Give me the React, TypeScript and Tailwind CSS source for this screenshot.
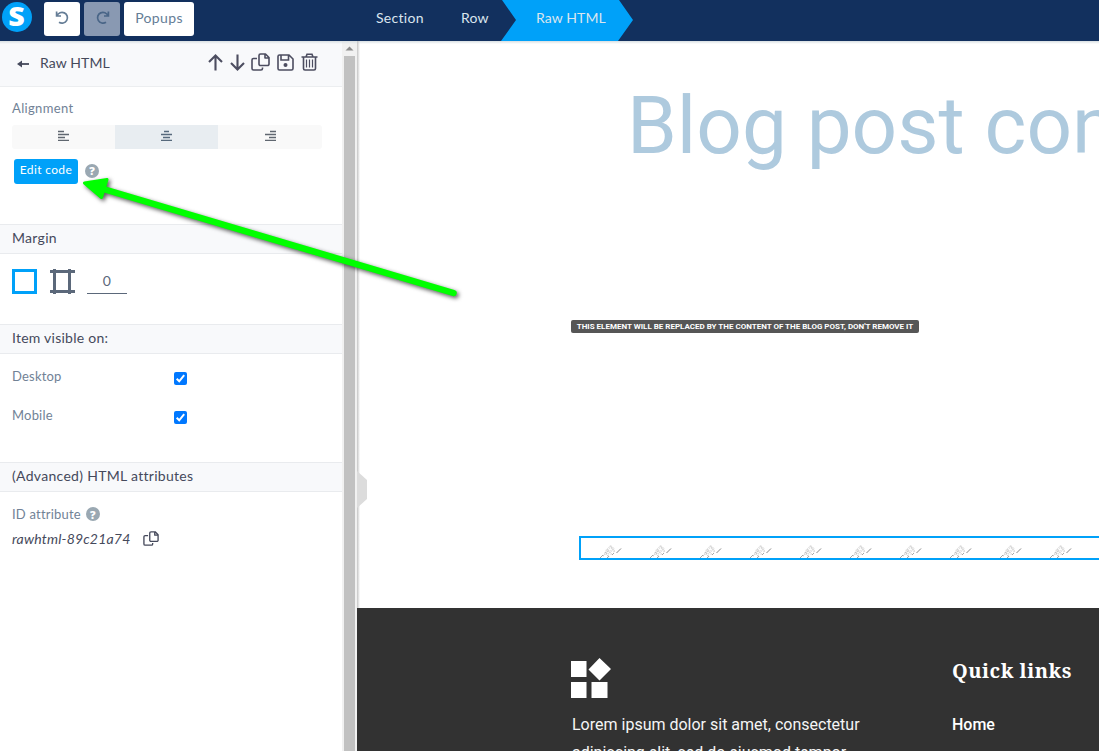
import React from "react";

function Logo() {
  return (
    <div className="flex h-[30px] w-[30px] items-center justify-center rounded-full bg-[#00a1f9] font-['Open_Sans',sans-serif] text-[26px] leading-[30px] font-extrabold text-white">
      <span className="-translate-y-px scale-x-110">S</span>
    </div>
  );
}

function TurnIcon({ flip }: { flip?: boolean }) {
  return (
    <svg width="15" height="15" viewBox="0 0 15 15" fill="none" stroke="currentColor" strokeWidth="1.700" className={flip ? "-scale-x-100" : ""}>
      <path d="M1.600 1.500V6H6M2 5.800A5.400 5.400 0 1 1 4 12.200" />
    </svg>
  );
}

function CopyIcon({ width, height, stroke }: { width: number; height: number; stroke: number }) {
  return (
    <svg width={width} height={height} viewBox="0 0 19 18" fill="none" stroke="currentColor" strokeWidth={stroke} strokeLinejoin="round">
      <path d="M9.500 1H14.500L18 4.500V11a1.500 1.500 0 0 1-1.500 1.500h-7A1.500 1.500 0 0 1 8 11V2.500A1.500 1.500 0 0 1 9.500 1ZM14 1V5H18" />
      <path d="M6 5.500H2.500A1.500 1.500 0 0 0 1 7v8.500A1.500 1.500 0 0 0 2.500 17H10a1.500 1.500 0 0 0 1.500-1.500V14.500" />
    </svg>
  );
}

function Help() {
  return (
    <span className="flex h-[14px] w-[14px] items-center justify-center rounded-full bg-[#9aa8b2] font-['Open_Sans',sans-serif] text-[11px] leading-none font-extrabold tracking-normal text-white">
      ?
    </span>
  );
}

function AlignIcon({ d }: { d: string }) {
  return (
    <svg width="11" height="11" viewBox="0 0 11 11" stroke="currentColor" strokeWidth="1.300">
      <path d={d} />
    </svg>
  );
}

function Check() {
  return (
    <svg width="13" height="13" viewBox="0 0 13 13">
      <rect width="13" height="13" rx="2" fill="#0078ff" />
      <path d="M2.700 6.800 5.200 9.300 10.200 3.200" fill="none" stroke="#fff" strokeWidth="2" />
    </svg>
  );
}

function Heading({ children }: { children: React.ReactNode }) {
  return (
    <div className="flex h-[30px] shrink-0 items-center border-y border-[#e9ebee] bg-[#f8f9fb] px-3 pb-[3px] text-[14px] tracking-[0.300px] text-[#45495b]">
      {children}
    </div>
  );
}

function Sidebar() {
  return (
    <aside className="flex h-full w-[342px] shrink-0 flex-col bg-white text-[13px] tracking-[0.200px] text-[#718296]">
      <div className="flex h-[46px] shrink-0 items-center border-b border-[#eceef0] bg-[#f8f9fb] pb-[2px] pl-[17px] text-[#45495b]">
        <svg width="12" height="10" viewBox="0 0 12 10" fill="none" stroke="currentColor" strokeWidth="1.800" className="mt-[3px]">
          <path d="M12 5H2" />
          <path d="M5 1.500 0 5l5 3.500z" fill="currentColor" stroke="none" />
        </svg>
        <span className="ml-[11px] w-[168px] pb-[1px] text-[14px] tracking-[0.100px]">Raw HTML</span>
        <div className="flex items-center pb-px text-[#4c4d60]">
          <svg width="15" height="17" viewBox="0 0 15 17" fill="none" stroke="currentColor" strokeWidth="2.100"><path d="M7.500 16.500V2M1 8l6.500-6.500L14 8" /></svg>
          <svg width="15" height="17" viewBox="0 0 15 17" fill="none" stroke="currentColor" strokeWidth="2.100" className="ml-[7px]"><path d="M7.500.5V15M1 9l6.500 6.500L14 9" /></svg>
          <span className="ml-[6px]"><CopyIcon width={19} height={18} stroke={1.6} /></span>
          <svg width="17" height="17" viewBox="0 0 17 17" fill="none" stroke="currentColor" strokeWidth="1.600" className="ml-[7px]">
            <path d="M2.500 1H12l4 4v9.500a1.500 1.500 0 0 1-1.500 1.500h-12A1.500 1.500 0 0 1 1 14.500v-12A1.500 1.500 0 0 1 2.500 1ZM4 1v5h7.500V1" />
            <circle cx="8.500" cy="11" r="2" fill="currentColor" stroke="none" />
          </svg>
          <svg width="17" height="18" viewBox="0 0 17 18" fill="none" stroke="currentColor" strokeWidth="1.600" className="ml-[7px]">
            <path d="M.5 4h16M5 4l1-2.700h5L12 4M2.500 4v11.500A1.500 1.500 0 0 0 4 17h9a1.500 1.500 0 0 0 1.500-1.500V4" />
            <path d="M5.500 6.500v8M8.500 6.500v8M11.500 6.500v8" strokeWidth="1.200" />
          </svg>
        </div>
      </div>
      <div className="flex h-[137px] shrink-0 flex-col px-3 pt-[12px]">
        <div className="h-[26px] leading-[19px] tracking-[0.350px]">Alignment</div>
        <div className="flex h-6 w-[310px] shrink-0 overflow-hidden rounded-[3px] bg-[#f9f9f9] text-[#606770]">
          <div className="flex w-[103px] items-center justify-center pb-[3px]"><AlignIcon d="M0 1.500h6M0 4.500h11M0 7.500h7M0 10.500h11" /></div>
          <div className="flex w-[103px] items-center justify-center bg-[#e8edf1] pb-[3px] text-[#56697c]"><AlignIcon d="M3 1.500h5M0 4.500h11M2 7.500h7M0 10.500h11" /></div>
          <div className="flex w-[104px] items-center justify-center pb-[3px]"><AlignIcon d="M5 1.500h6M0 4.500h11M4 7.500h7M0 10.500h11" /></div>
        </div>
        <div className="mt-[10px] flex items-center pl-[2px]">
          <button className="mr-[7px] flex h-[25px] w-16 items-center justify-center rounded-[3px] bg-[#00a1f9] pb-[3px] text-[12px] tracking-[0.350px] text-white">Edit code</button>
          <span className="pb-[2px]"><Help /></span>
        </div>
      </div>
      <Heading>Margin</Heading>
      <div className="flex h-[70px] shrink-0 items-start px-3 pt-[15px]">
        <div className="h-[25px] w-[25px] border-[3px] border-[#00a1f9]" />
        <svg width="25" height="25" viewBox="0 0 25 25" stroke="#5b687a" strokeWidth="3" className="ml-[13px]">
          <path d="M0 2.500h25M0 22.500h25M4.500 0v25M19.500 0v25" />
        </svg>
        <div className="ml-3 flex h-[25px] w-10 items-center justify-center border-b border-[#5b687a] pb-[2px] text-[14px] text-[#5b687a]">0</div>
      </div>
      <Heading><span className="tracking-[0.250px]">Item visible on:</span></Heading>
      <div className="flex h-[108px] shrink-0 flex-col pl-3">
        <div className="flex h-[49px] items-center"><span className="w-[162px] pb-[4px]">Desktop</span><Check /></div>
        <div className="flex h-[29px] items-center"><span className="w-[162px] pb-[3px]">Mobile</span><Check /></div>
      </div>
      <Heading>(Advanced) HTML attributes</Heading>
      <div className="flex flex-col pt-[12px] pl-3">
        <div className="flex h-[22px] items-center gap-[5px]"><span className="tracking-[0.200px]">ID attribute</span><span className="pb-[2px]"><Help /></span></div>
        <div className="mt-[1px] flex h-[23px] items-center gap-[12px] text-[14px] text-[#45495b]"><i>rawhtml-89c21a74</i><CopyIcon width={16} height={15} stroke={1.6} /></div>
      </div>
    </aside>
  );
}

function Canvas() {
  return (
    <main className="flex h-full w-[742px] shrink-0 flex-col overflow-hidden bg-white">
      <div className="h-[279px] shrink-0 pt-[38px] pl-[270px] font-[Roboto,sans-serif] text-[80px] leading-[94px] whitespace-nowrap text-[#aecade]">Blog post content</div>
      <div className="ml-[214px] flex h-[13px] w-[348px] shrink-0 items-center justify-center rounded-[2px] bg-[#565656] font-[Roboto,sans-serif] text-[8px] font-bold whitespace-nowrap text-white">
        THIS ELEMENT WILL BE REPLACED BY THE CONTENT OF THE BLOG POST, DON'T REMOVE IT
      </div>
      <div className="mt-[203px] ml-[222px] flex h-6 w-[600px] shrink-0 overflow-hidden border-2 border-[#00a1f9]">
        {Array.from({ length: 12 }, (_, i) => (
          <svg key={i} width="50" height="20" viewBox="0 0 50 20" className="shrink-0" fill="none">
            <path d="M22 18l5-5M24 14l4 5M26 11l5 6M29 8l5 6" stroke="#c4c4c4" strokeWidth="1.500" strokeDasharray="1 1" />
            <path d="M25 13l5-5M27 16l6-6M30 8l4 7" stroke="#dcdcdc" strokeWidth="2" strokeDasharray="1 1" />
            <path d="M19 20l3-3M26 20l2-2M31 17l2-2" stroke="#a5a5a5" strokeWidth="1" />
            <path d="M35.500 15l4.500-4.500" stroke="#777" strokeWidth=".9" />
          </svg>
        ))}
      </div>
      <footer className="mt-12 flex grow bg-[#323232] font-[Roboto,sans-serif] text-[16px] leading-[28px] text-white">
        <div className="w-[595px] pt-[50px] pl-[214px]">
          <svg width="41" height="42" viewBox="0 0 41 42" fill="#fff"><path d="M0 3h15.500v16H0zM0 24h15.500v16H0zM20.500 24h16v16h-16zM28.500 0 40 11 28.500 22.500 17.500 11.500z" /></svg>
          <p className="mt-[11px] w-[320px] pl-px text-[#f5f5f5]">Lorem ipsum dolor sit amet, consectetur<br />adipiscing elit, sed do eiusmod tempor</p>
        </div>
        <div className="pt-[49px]">
          <h2 className="font-['Roboto_Slab','Noto_Serif','DejaVu_Serif',serif] text-[20px] font-bold tracking-[0.500px] whitespace-nowrap">Quick links</h2>
          <p className="mt-[26px] font-medium">Home</p>
        </div>
      </footer>
    </main>
  );
}

export default function App() {
  return (
    <div className="relative flex h-[751px] w-[1099px] flex-col overflow-hidden bg-white font-[Lato,sans-serif]">
      <header className="flex h-[41px] shrink-0 bg-[#12305e] text-[14px] text-[#dbe5ee]">
        <div className="flex w-[357px] items-start gap-1 pt-[2px] pl-[2px]">
          <Logo />
          <button className="ml-2 flex h-[34px] w-9 items-center justify-center rounded-[3px] bg-white pb-[3px] text-[#657d96]"><TurnIcon /></button>
          <button className="flex h-[34px] w-9 items-center justify-center rounded-[3px] bg-[#8999b2] pb-[3px] text-[#496587]"><TurnIcon flip /></button>
          <button className="flex h-[34px] w-[70px] items-center justify-center rounded-[3px] bg-white pb-[3px] tracking-[0.350px] text-[#657d96]">Popups</button>
        </div>
        <nav className="flex items-center">
          <span className="w-[85px] pb-[6px] pl-[19px] tracking-[0.300px]">Section</span>
          <span className="w-[59px] pb-[6px] pl-[19px] tracking-[0.200px]">Row</span>
          <div className="flex h-full w-[132px] items-center bg-[#00a1f9] pb-[6px] pl-[35px] tracking-[0.100px] [clip-path:polygon(1px_0,118px_0,132px_20px,117px_100%,0_100%,15px_20px)]">Raw HTML</div>
        </nav>
      </header>
      <div className="flex h-[710px]">
        <Sidebar />
        <div className="flex w-[15px] shrink-0 flex-col bg-[#f1f1f1]">
          <svg width="15" height="15" viewBox="0 0 15 15"><path d="M3.500 9.500 7.500 5.500 11.500 9.500z" fill="#8b8b8b" /></svg>
          <div className="ml-[2px] w-[11px] grow bg-[#c1c1c1]" />
        </div>
        <Canvas />
      </div>
      <div className="absolute top-[41px] left-0 h-[3px] w-full bg-gradient-to-b from-[#d8dfe2] to-transparent" />
      <div className="absolute top-[41px] left-[357px] h-[567px] w-[3px] bg-gradient-to-r from-[#c4c4c4] to-transparent" />
      <svg width="10" height="38" viewBox="0 0 10 38" className="absolute top-[471px] left-[357px]"><path d="M0 0 10 9V28L0 37z" fill="#dcdcdc" /></svg>
      <svg width="400" height="140" viewBox="70 165 400 140" className="absolute top-[165px] left-[70px] drop-shadow-[2px_2px_2px_rgba(0,0,0,0.65)]">
        <path d="M105 189.500 453.500 293" stroke="#0f0" strokeWidth="6.500" strokeLinecap="round" />
        <path d="M84.500 183 107 179.500 101.500 197.500z" fill="#0f0" stroke="#0f0" strokeWidth="3" strokeLinejoin="round" />
      </svg>
    </div>
  );
}
